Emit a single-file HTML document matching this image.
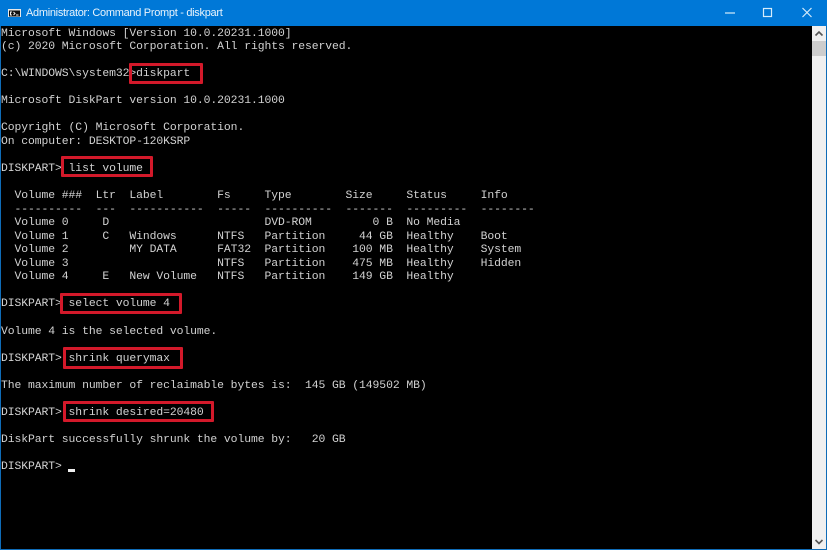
<!DOCTYPE html>
<html><head><meta charset="utf-8"><style>
html,body{margin:0;padding:0;background:#000}
#w{position:relative;width:827px;height:550px;overflow:hidden;background:#000}
#t{position:absolute;left:0;top:0;width:827px;height:26px;background:#0078d7}
#tt{position:absolute;left:26px;top:5px;font:11px/16px "Liberation Sans",sans-serif;letter-spacing:-.3px;color:#eaf4fc;white-space:pre}
pre{position:absolute;left:1px;top:27.5px;margin:0;font:11.4px/13.55px "Liberation Mono",monospace;letter-spacing:-.08px;color:#d2d2d2;filter:blur(.3px)}
.r{position:absolute;border:3px solid #d3192a;border-radius:1px;box-sizing:border-box}
.b{position:absolute;background:#0f6cb8}
</style></head><body><div id="w">
<div id="t"></div>
<svg style="position:absolute;left:8px;top:9px" width="13" height="8" viewBox="0 0 13 8"><rect width="13" height="8" fill="#e8e8e8"/><rect x="1" y="1.5" width="11" height="6" fill="#111"/><path d="M4 3H2.5V6H4M5.5 3L7 4.5L5.5 6M8 6H10.5" stroke="#eee" fill="none"/></svg>
<div id="tt">Administrator: Command Prompt - diskpart</div>
<svg style="position:absolute;left:720px;top:5px" width="100" height="16" viewBox="0 0 100 16" fill="none" stroke="#d5ecfb"><path d="M5 8H15" stroke-width="1.2"/><rect x="43.5" y="3.5" width="8" height="8" stroke-width="1.2"/><path d="M82.5 3L91.5 12M91.5 3L82.5 12" stroke-width="1.2"/></svg>
<pre>Microsoft Windows [Version 10.0.20231.1000]
(c) 2020 Microsoft Corporation. All rights reserved.

C:\WINDOWS\system32&gt;diskpart

Microsoft DiskPart version 10.0.20231.1000

Copyright (C) Microsoft Corporation.
On computer: DESKTOP-120KSRP

DISKPART&gt; list volume

  Volume ###  Ltr  Label        Fs     Type        Size     Status     Info
  ----------  ---  -----------  -----  ----------  -------  ---------  --------
  Volume 0     D                       DVD-ROM         0 B  No Media
  Volume 1     C   Windows      NTFS   Partition     44 GB  Healthy    Boot
  Volume 2         MY DATA      FAT32  Partition    100 MB  Healthy    System
  Volume 3                      NTFS   Partition    475 MB  Healthy    Hidden
  Volume 4     E   New Volume   NTFS   Partition    149 GB  Healthy

DISKPART&gt; select volume 4

Volume 4 is the selected volume.

DISKPART&gt; shrink querymax

The maximum number of reclaimable bytes is:  145 GB (149502 MB)

DISKPART&gt; shrink desired=20480

DiskPart successfully shrunk the volume by:   20 GB

DISKPART&gt;</pre>
<div style="position:absolute;left:68px;top:469px;width:7px;height:3px;background:#eee"></div>
<div class="r" style="left:129px;top:63px;width:74px;height:21px"></div>
<div class="r" style="left:61px;top:156px;width:92px;height:21px"></div>
<div class="r" style="left:60px;top:293px;width:122px;height:21px"></div>
<div class="r" style="left:63px;top:347px;width:120px;height:22px"></div>
<div class="r" style="left:63px;top:401px;width:151px;height:21px"></div>
<div style="position:absolute;left:812px;top:26px;width:14px;height:523px;background:#f0f0f0"></div>
<div style="position:absolute;left:812px;top:41px;width:14px;height:15px;background:#cdcdcd"></div>
<svg style="position:absolute;left:812px;top:26px" width="14" height="15" viewBox="0 0 14 15"><path d="M3.5 9.5L7 6L10.5 9.5" stroke="#555" stroke-width="1.6" fill="none"/></svg>
<svg style="position:absolute;left:812px;top:534px" width="14" height="15" viewBox="0 0 14 15"><path d="M3.5 6L7 9.5L10.5 6" stroke="#555" stroke-width="1.6" fill="none"/></svg>
<div class="b" style="left:0;top:26px;width:1px;height:524px"></div>
<div class="b" style="left:826px;top:26px;width:1px;height:524px"></div>
<div class="b" style="left:0;top:549px;width:827px;height:1px"></div>
</div></body></html>
